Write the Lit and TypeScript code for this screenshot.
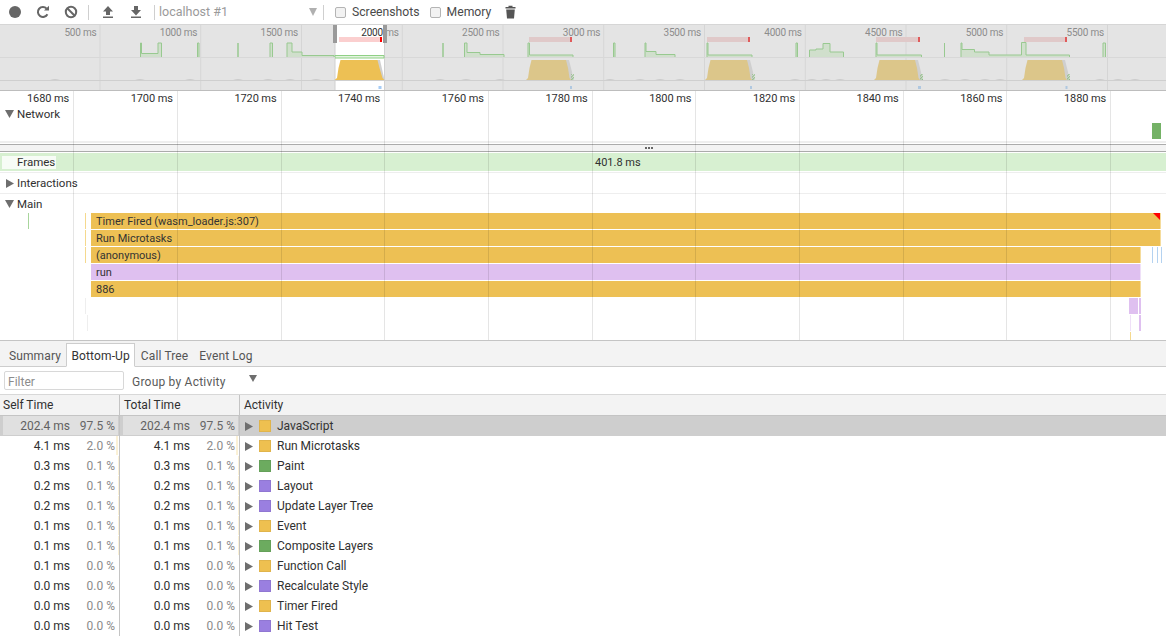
import { LitElement, html, css, svg } from "lit";
import { customElement } from "lit/decorators.js";

const OVERVIEW_TICKS = [500, 1000, 1500, 2000, 2500, 3000, 3500, 4000, 4500, 5000, 5500];
const RULER_TICKS = [1680, 1700, 1720, 1740, 1760, 1780, 1800, 1820, 1840, 1860, 1880];
const RULER_X = RULER_TICKS.map((_, i) => 73.6 + i * 103.7);
const OV_X = OVERVIEW_TICKS.map((_, i) => 100 + i * 100.75);

const GREEN: number[][][] = [
  [[140.5, 43], [141.5, 43], [141.5, 53.5], [158, 53.5], [158, 43], [161.5, 43]],
  [[197.5, 43], [199, 43]],
  [[238, 43]],
  [[270, 43], [272.5, 43]],
  [[287, 43], [292, 43], [292, 52], [302, 52], [302, 55.5], [334, 55.5]],
  [[443, 43]],
  [[464.5, 43], [467, 43], [467, 52.5], [480, 52.5], [480, 54.5], [504, 54.5]],
  [[528, 43], [529.5, 43], [529.5, 55], [573, 55]],
  [[613.5, 43], [615, 43]],
  [[645, 43], [646, 43], [646, 51.5], [656, 51.5], [656, 54.5], [675, 54.5]],
  [[707, 43], [708, 43], [708, 55], [752, 55]],
  [[796, 43], [797.5, 43]],
  [[809.5, 50], [816, 50], [816, 49], [823, 49], [823, 43.5], [830, 43.5], [830, 52], [843.5, 52]],
  [[876, 43], [877, 43], [877, 55], [921.5, 55]],
  [[944.5, 43]],
  [[961, 43], [962, 43], [962, 49.5], [974.5, 49.5], [974.5, 52], [989, 52], [989, 55], [1021.5, 55], [1021.5, 42.5], [1026, 42.5], [1026, 55], [1069.5, 55]],
  [[1103, 43], [1105.5, 43]],
];
const YELLOW: [number, number][] = [[526, 571], [705, 752], [874, 920], [1022, 1067]];
const RED: [number, number][] = [[529, 572], [707, 750], [876, 920], [1024, 1067]];
const BLUE: [number, number][] = [[570, 2], [750, 2], [918, 3], [1065.5, 2]];
const CPU_BUMPS = [55, 140, 190, 238, 268, 290, 316, 440, 466, 500, 610, 640, 660, 680, 795, 812, 826, 840, 945, 965, 985, 1000, 1100, 1118, 1135];

function stepPath(pts: number[][]) {
  const first = pts[0];
  const last = pts[pts.length - 1];
  return `M${first[0]} 58 ` + pts.map((p) => `L${p[0]} ${p[1]}`).join(" ") + ` L${last[0]} 58`;
}

@customElement("timeline-overview")
class TimelineOverview extends LitElement {
  static styles = css`
    :host { display: block; height: 67px; border-bottom: 1px solid #bdbdbd; box-sizing: border-box; }
    svg { display: block; width: 1166px; height: 66px; }
    text { font: 10px Roboto, sans-serif; letter-spacing: -0.2px; }
  `;
  render() {
    return html`<svg viewBox="0 24 1166 66" xmlns="http://www.w3.org/2000/svg">
      <defs>
        <clipPath id="win"><rect x="335" y="24" width="50" height="66"></rect></clipPath>
        <pattern id="hatch" width="2" height="2" patternUnits="userSpaceOnUse" patternTransform="rotate(45)">
          <rect width="1" height="2" fill="#8fc084"></rect>
        </pattern>
      </defs>
      <rect x="0" y="24" width="1166" height="66" fill="#e4e4e4"></rect>
      <rect x="0" y="24" width="1166" height="1" fill="#d6d6d6"></rect>
      ${OV_X.map((x) => svg`<rect x=${x - 0.5} y="25" width="1" height="65" fill="#d5d5d5"></rect>`)}
      ${OVERVIEW_TICKS.map((t, i) => svg`<text x=${OV_X[i] - 3.5} y="36" text-anchor="end" fill="#8c8c8c">${t} ms</text>`)}
      <rect x="335" y="25" width="50" height="65" fill="#fff"></rect>
      <rect x="334.5" y="43" width="1" height="47" fill="#d0d0d0"></rect>
      <rect x="384" y="43" width="1" height="47" fill="#d0d0d0"></rect>
      <text x=${OV_X[3] - 3.5} y="36" text-anchor="end" fill="#333" clip-path="url(#win)">2000 ms</text>
      ${RED.map(([a, b]) => svg`<rect x=${a} y="37" width=${b - a} height="5" fill="#e0c9c9"></rect>
        <rect x=${b - 2} y="37" width="2" height="5" fill="#e05a5a"></rect>`)}
      <rect x="339" y="37" width="43" height="5" fill="#fbcfcf"></rect>
      <rect x="380" y="37" width="2" height="5" fill="#f00"></rect>
      ${GREEN.map((g) => svg`<path d=${stepPath(g)} fill="#d0dfcc" stroke="#98c990" stroke-width="1"></path>`)}
      <path d="M335 58 L335 55.5 L384 55.5 L384 58 Z" fill="#e4f4e0" stroke="#8fd085" stroke-width="1"></path>
      ${CPU_BUMPS.map((x) => svg`<path d="M${x - 5} 80 Q${x} 78.5 ${x + 5} 80 Z" fill="#c4c4c4"></path>`)}
      <rect x="0" y="57" width="335" height="1" fill="#d8d8d8"></rect>
      <rect x="385" y="57" width="781" height="1" fill="#d8d8d8"></rect>
      ${YELLOW.map(([a, b]) => svg`
        <path d="M${b - 9} 60 L${b - 2} 60 L${b + 1} 72 L${b + 2} 80 L${b - 2} 80 Z" fill="#cfcfcf"></path>
        <rect x=${b} y="74" width="3" height="6" fill="url(#hatch)"></rect>
        <path d="M${a} 80 L${a + 2} 78 L${a + 3.5} 68 L${a + 5.5} 60 L${b - 5} 60 L${b - 3} 68 L${b - 1.5} 78 L${b} 80 Z" fill="#dcc68a"></path>`)}
      <path d="M376 60 L380 60 L384.5 80 L380 80 Z" fill="#d0d0d0"></path>
      <path d="M334.5 80 L337 78 L338.5 68 L340.5 60 L377.5 60 L379.5 68 L382.5 78 L384.5 80 Z" fill="#edc054"></path>
      <rect x="0" y="80" width="1166" height="1" fill="#cfcfcf"></rect>
      ${BLUE.map(([x, w]) => svg`<rect x=${x} y="86" width=${w} height="3" fill="#b0c8e0"></rect>`)}
      <rect x="378.5" y="86" width="3" height="3" fill="#a6ccf5"></rect>
      <rect x="333" y="25" width="4" height="18" fill="#9a9a9a"></rect>
      <rect x="383" y="25" width="4" height="18" fill="#9a9a9a"></rect>
    </svg>`;
  }
}

interface Row { self: string; selfPct: string; total: string; totalPct: string; name: string; color: string; sp: number; tp: number; }
const Y = "#eec050", G = "#6cab5f", P = "#9a7fe0";
const ROWS: Row[] = [
  { self: "202.4 ms", selfPct: "97.5 %", total: "202.4 ms", totalPct: "97.5 %", name: "JavaScript", color: Y, sp: 97.5, tp: 97.5 },
  { self: "4.1 ms", selfPct: "2.0 %", total: "4.1 ms", totalPct: "2.0 %", name: "Run Microtasks", color: Y, sp: 2, tp: 2 },
  { self: "0.3 ms", selfPct: "0.1 %", total: "0.3 ms", totalPct: "0.1 %", name: "Paint", color: G, sp: 0.1, tp: 0.1 },
  { self: "0.2 ms", selfPct: "0.1 %", total: "0.2 ms", totalPct: "0.1 %", name: "Layout", color: P, sp: 0.1, tp: 0.1 },
  { self: "0.2 ms", selfPct: "0.1 %", total: "0.2 ms", totalPct: "0.1 %", name: "Update Layer Tree", color: P, sp: 0.1, tp: 0.1 },
  { self: "0.1 ms", selfPct: "0.1 %", total: "0.1 ms", totalPct: "0.1 %", name: "Event", color: Y, sp: 0.1, tp: 0.1 },
  { self: "0.1 ms", selfPct: "0.1 %", total: "0.1 ms", totalPct: "0.1 %", name: "Composite Layers", color: G, sp: 0.1, tp: 0.1 },
  { self: "0.1 ms", selfPct: "0.0 %", total: "0.1 ms", totalPct: "0.0 %", name: "Function Call", color: Y, sp: 0, tp: 0 },
  { self: "0.0 ms", selfPct: "0.0 %", total: "0.0 ms", totalPct: "0.0 %", name: "Recalculate Style", color: P, sp: 0, tp: 0 },
  { self: "0.0 ms", selfPct: "0.0 %", total: "0.0 ms", totalPct: "0.0 %", name: "Timer Fired", color: Y, sp: 0, tp: 0 },
  { self: "0.0 ms", selfPct: "0.0 %", total: "0.0 ms", totalPct: "0.0 %", name: "Hit Test", color: P, sp: 0, tp: 0 },
];

interface Bar { x: number; y: number; w: number; h: number; c: string; label?: string; }
const FY = "#edc054", FP = "#dfc0f0", FL = "#f5dc9c";
const FLAME: Bar[] = [
  { x: 27.5, y: 0, w: 1.5, h: 16, c: "#a8d59c" },
  { x: 84.5, y: 0, w: 1.5, h: 16, c: "#f5d98e" },
  { x: 85, y: 17, w: 1, h: 16, c: "#f5d98e" },
  { x: 85, y: 34, w: 1, h: 16, c: "#f5d98e" },
  { x: 85, y: 85, w: 1, h: 16, c: "#eeeeee" },
  { x: 87, y: 102, w: 1, h: 16, c: "#eeeeee" },
  { x: 91, y: 0, w: 1069, h: 16, c: FY, label: "Timer Fired (wasm_loader.js:307)" },
  { x: 91, y: 17, w: 1069, h: 16, c: FY, label: "Run Microtasks" },
  { x: 91, y: 34, w: 1049, h: 16, c: FY, label: "(anonymous)" },
  { x: 91, y: 51, w: 1049, h: 16, c: FP, label: "run" },
  { x: 91, y: 68, w: 1049, h: 16, c: FY, label: "886" },
  { x: 1160, y: 0, w: 1, h: 16, c: FL },
  { x: 1160, y: 17, w: 1, h: 16, c: FL },
  { x: 1140, y: 34, w: 1, h: 16, c: FL },
  { x: 1140, y: 51, w: 1, h: 16, c: "#efe0f8" },
  { x: 1140, y: 68, w: 1, h: 16, c: FL },
  { x: 1152, y: 34, w: 1, h: 16, c: "#b4d2f0" },
  { x: 1157, y: 34, w: 1, h: 16, c: "#b4d2f0" },
  { x: 1161, y: 34, w: 1, h: 16, c: "#b4d2f0" },
  { x: 1129, y: 85, w: 9, h: 16, c: FP },
  { x: 1139, y: 85, w: 2, h: 16, c: FP },
  { x: 1130, y: 102, w: 1, h: 16, c: "#efe0f8" },
  { x: 1139, y: 102, w: 2, h: 16, c: FP },
  { x: 1130, y: 119, w: 1, h: 8, c: "#f5d98e" },
];

const arrowDown = html`<svg class="tri" viewBox="0 0 9 8" width="9" height="8"><path d="M0 0 H9 L4.5 8 Z" fill="#6e6e6e"></path></svg>`;
const arrowRight = html`<svg class="tri" viewBox="0 0 8 9" width="8" height="9"><path d="M0 0 L8 4.5 L0 9 Z" fill="#6e6e6e"></path></svg>`;

@customElement("app-root")
class AppRoot extends LitElement {
  static styles = css`
    :host { display: block; width: 1166px; height: 637px; overflow: hidden; background: #fff; color: #303030;
      font: 12px/16px Roboto, sans-serif; }
    svg { display: block; flex: none; }
    .toolbar { height: 24px; display: flex; align-items: center; background: #fff; }
    .tb { width: 28px; height: 24px; display: flex; align-items: center; justify-content: center; flex: none; }
    .first { margin-left: 1px; }
    .sep { width: 1px; height: 15px; background: #cfcfcf; flex: none; margin: 0 3px; }
    .sepl { margin: 0 3px 0 4px; }
    .sepr { margin: 0 11px 0 0; }
    .up { margin-left: 2px; }
    .select { width: 165px; display: flex; justify-content: space-between; align-items: center; color: #9a9a9a; padding: 0 6px 0 1px; box-sizing: border-box; font-size: 12.5px; }
    .select i { width: 0; height: 0; border-left: 4.5px solid transparent; border-right: 4.5px solid transparent; border-top: 8px solid #b0b0b0; }
    .check { width: 11px; height: 11px; border: 1px solid #b4b4b4; border-radius: 2px; background: #f2f2f2; box-sizing: border-box; flex: none; }
    .cklabel { color: #4a4a4a; margin-left: 6px; font-size: 12.2px; }
    .ck2 { margin-left: 10px; }
    .trash { margin-left: 5px; }

    .tracks { position: relative; height: 249px; overflow: hidden; }
    .ruler { height: 14px; position: relative; font-size: 11px; letter-spacing: -0.1px; }
    .ruler span { position: absolute; top: 1px; width: 60px; text-align: right; line-height: 14px; }
    .grid { position: absolute; top: 0; bottom: 0; width: 1px; background: rgba(0,0,0,.1); z-index: 2; }
    .network { height: 36px; position: relative; border-bottom: 2px solid #eee; margin-bottom: 1px; font-size: 11.5px; }
    .head { display: flex; align-items: center; height: 18px; }
    .head .ar { width: 17px; flex: none; padding-left: 5px; box-sizing: border-box; }
    .req { position: absolute; left: 1152px; top: 18px; width: 9px; height: 16px; background: #74b266; }
    .splitter { height: 8px; box-sizing: border-box; background: #f3f3f3; border-top: 1px solid #ababab; border-bottom: 1px solid #ababab; display: flex; padding-left: 645px; align-items: center; gap: 1px; }
    .splitter b { width: 2px; height: 2px; background: #666; }
    .frames { margin-top: 1px; height: 18px; background: #d7f0d1; position: relative; display: flex; align-items: center; font-size: 11.5px; }
    .frames .lab { margin-left: 2px; height: 13px; width: 54px; background: rgba(255,255,255,.8); line-height: 13px; padding-left: 15px; box-sizing: border-box; }
    .frames .dur { position: absolute; left: 595px; top: 2px; font-size: 11px; }
    .row { height: 21px; border-top: 1px solid #eee; margin-top: 1px; display: flex; align-items: center; box-sizing: border-box; font-size: 11.5px; }
    .main { height: 20px; margin-top: 0; }
    .row .tri { margin-left: 6px; margin-right: 3px; }
    .row .tri.d { margin-left: 5px; margin-right: 3px; }
    .mainlab { padding-top: 1px; }
    .flame { position: absolute; left: 0; right: 0; top: 122px; height: 127px; font-size: 11px; }
    .bar { position: absolute; line-height: 17px; padding-left: 5px; box-sizing: border-box; white-space: nowrap; overflow: hidden; color: #333; }
    .bar.thin { padding: 0; }
    .corner { position: absolute; left: 1153px; top: 0; z-index: 3; }

    .tabs { height: 27px; background: #f3f3f3; border-top: 1px solid #c4c4c4; border-bottom: 1px solid #cdcdcd; box-sizing: border-box; display: flex; align-items: flex-end; padding-left: 3px; letter-spacing: 0.12px; }
    .tab { height: 24px; line-height: 26px; padding: 0 6px; color: #555; margin-bottom: -1px; box-sizing: border-box; flex: none; }
    .tab.sum { padding: 0 5px 0 6px; }
    .tab.active { background: #fff; border: 1px solid #cdcdcd; border-bottom: 1px solid #fff; color: #333; padding: 0 4.5px; line-height: 24px; }
    .tab.ct { padding: 0 5px; margin-left: 0.5px; }
    .tab.el { padding: 0 5px; margin-left: 1px; }
    .filterbar { height: 27px; display: flex; align-items: center; box-sizing: border-box; padding-left: 4px; }
    .filter { width: 120px; height: 19px; border: 1px solid #d8d8d8; border-radius: 2px; box-sizing: border-box; color: #8c8c8c; padding-left: 3px; line-height: 20px; }
    .group { color: #5a5a5a; margin-left: 8px; width: 117px; padding-top: 2px; letter-spacing: 0.22px; white-space: nowrap; }
    .filterbar i { width: 0; height: 0; border-left: 4.5px solid transparent; border-right: 4.5px solid transparent; border-top: 7px solid #6e6e6e; margin-top: -4px; }
    .thead, .tr { display: grid; grid-template-columns: 120px 120px 1fr; }
    .thead { height: 22px; background: #f3f3f3; border-top: 1px solid #d8d8d8; border-bottom: 1px solid #c4c4c4; box-sizing: border-box; line-height: 20px; }
    .thead div { padding-left: 3px; border-right: 1px solid #c4c4c4; }
    .thead div + div { padding-left: 4px; }
    .thead div:last-child { border-right: 0; }
    .tr { height: 20px; line-height: 20px; }
    .tr.sel { background: #cecece; color: #606060; }
    .tc { position: relative; border-right: 1px solid #c4c4c4; display: flex; justify-content: flex-end; padding-right: 4px; box-sizing: border-box; }
    .tc .fill { position: absolute; right: 1px; top: 0; bottom: 1px; background: #fbf1d6; }
    .tr.sel .tc .fill { background: #e0e0e0; }
    .tc span { position: relative; }
    .tc .pct { color: #8a8a8a; width: 45px; text-align: right; }
    .tr.sel .tc .pct { color: #666; }
    .act { display: flex; align-items: center; padding-left: 5px; }
    .swatch { width: 12px; height: 12px; box-sizing: border-box; margin: 0 6px; border: 1px solid rgba(0,0,0,.06); }
    .tr.sel .act { color: #333; }
  `;

  render() {
    return html`
      <div class="toolbar">
        <div class="tb first"><svg width="14" height="14" viewBox="0 0 14 14"><circle cx="7" cy="7" r="6" fill="#666"></circle></svg></div>
        <div class="tb"><svg width="14" height="14" viewBox="0 0 14 14"><path d="M11.4 9.2 A5 5 0 1 1 10.6 3.6" fill="none" stroke="#666" stroke-width="2"></path><path d="M8 5.6 H13 V0.8 Z" fill="#666"></path></svg></div>
        <div class="tb"><svg width="14" height="14" viewBox="0 0 14 14"><circle cx="7" cy="7" r="5.2" fill="none" stroke="#666" stroke-width="2"></circle><path d="M3.3 3.3 L10.7 10.7" stroke="#666" stroke-width="2"></path></svg></div>
        <div class="sep"></div>
        <div class="tb up"><svg width="12" height="14" viewBox="0 0 12 14"><path d="M6 1 L11 6.5 H8 V10 H4 V6.5 H1 Z M1 11.5 H11 V13 H1 Z" fill="#666"></path></svg></div>
        <div class="tb"><svg width="12" height="14" viewBox="0 0 12 14"><path d="M4 1 H8 V5 H11 L6 10.5 L1 5 H4 Z M1 11.5 H11 V13 H1 Z" fill="#666"></path></svg></div>
        <div class="sep sepl"></div>
        <div class="select"><span>localhost #1</span><i></i></div>
        <div class="sep sepr"></div>
        <div class="check"></div><span class="cklabel">Screenshots</span>
        <div class="check ck2"></div><span class="cklabel">Memory</span>
        <div class="tb trash"><svg width="11" height="14" viewBox="0 0 11 14"><path d="M0.5 2 H3.5 V0.8 H7.5 V2 H10.5 V3.6 H0.5 Z M1.2 4.4 H9.8 L9 13.4 H2 Z" fill="#555"></path></svg></div>
      </div>
      <timeline-overview></timeline-overview>
      <div class="tracks">
        ${RULER_X.map((x) => html`<div class="grid" style="left:${x - 0.5}px"></div>`)}
        <div class="ruler">
          ${RULER_TICKS.map((t, i) => html`<span style="left:${RULER_X[i] - 64.5}px">${t} ms</span>`)}
        </div>
        <div class="network">
          <div class="head"><span class="ar">${arrowDown}</span>Network</div>
          <div class="req"></div>
        </div>
        <div class="splitter"><b></b><b></b><b></b></div>
        <div class="frames"><div class="lab">Frames</div><span class="dur">401.8 ms</span></div>
        <div class="row">${arrowRight}<span>Interactions</span></div>
        <div class="row main"><svg class="tri d" viewBox="0 0 9 8" width="9" height="8"><path d="M0 0 H9 L4.5 8 Z" fill="#6e6e6e"></path></svg><span class="mainlab">Main</span></div>
        <div class="flame">
          ${FLAME.map((b) => html`<div class="bar ${b.label ? "" : "thin"}" style="left:${b.x}px;top:${b.y}px;width:${b.w}px;height:${b.h}px;background:${b.c}">${b.label ?? ""}</div>`)}
          <svg class="corner" width="8" height="8" viewBox="0 0 8 8"><path d="M0 0 H7 V7 Z" fill="#f00"></path></svg>
        </div>
      </div>
      <div class="tabs">
        <div class="tab sum">Summary</div>
        <div class="tab active">Bottom-Up</div>
        <div class="tab ct">Call Tree</div>
        <div class="tab el">Event Log</div>
      </div>
      <div class="filterbar">
        <div class="filter">Filter</div>
        <span class="group">Group by Activity</span><i></i>
      </div>
      <div class="thead"><div>Self Time</div><div>Total Time</div><div>Activity</div></div>
      ${ROWS.map((r, i) => html`
        <div class="tr ${i === 0 ? "sel" : ""}">
          <div class="tc"><div class="fill" style="width:${r.sp * 1.18}px"></div><span>${r.self}</span><span class="pct">${r.selfPct}</span></div>
          <div class="tc"><div class="fill" style="width:${r.tp * 1.18}px"></div><span>${r.total}</span><span class="pct">${r.totalPct}</span></div>
          <div class="act">${arrowRight}<span class="swatch" style="background:${r.color}"></span>${r.name}</div>
        </div>`)}
    `;
  }
}
